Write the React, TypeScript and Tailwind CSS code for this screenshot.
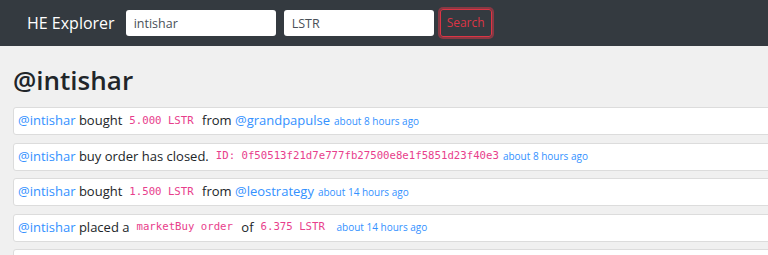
import React from "react";

const sans = "font-['Open_Sans','Noto_Sans',sans-serif]";
const mono = "font-['DejaVu_Sans_Mono','Liberation_Mono',monospace]";

function User({ name }: { name: string }) {
  return <span className="text-[#3391ff]">@{name}</span>;
}

function Code({ children, last }: { children: React.ReactNode; last?: boolean }) {
  return (
    <code className={`${mono} text-[10.7px] text-[#e83e8c] ml-[7px] ${last ? "mr-0" : "mr-[5px]"}`}>
      {children}
    </code>
  );
}

function Time({ children }: { children: React.ReactNode }) {
  return <span className="text-[10px] text-[#3391ff] ml-[4px]">{children}</span>;
}

function Card({ children }: { children: React.ReactNode }) {
  return (
    <div className="h-[28px] flex items-center bg-white border border-[#dcdcdc] rounded-[3px] pl-[4px] whitespace-nowrap text-[13px] text-[#212529]">
      {children}
    </div>
  );
}

export default function App() {
  return (
    <div className={`${sans} min-h-screen bg-[#f0f0f0] overflow-hidden`}>
      <nav className="h-[46px] bg-[#343a40] flex items-center pl-[27px]">
        <span className="text-white text-[16px] mr-[11px]">HE Explorer</span>
        <input
          readOnly
          value="intishar"
          className="w-[150px] h-[26px] bg-white rounded-[3px] px-[8px] text-[12.5px] text-[#495057] outline-none"
        />
        <input
          readOnly
          value="LSTR"
          className="w-[150px] h-[26px] bg-white rounded-[3px] px-[8px] ml-[8px] text-[12.5px] text-[#495057] outline-none"
        />
        <button className="ml-[6px] h-[28px] px-[6px] border border-[#dc3545] rounded-[3px] text-[#dc3545] text-[12px] shadow-[0_0_0_2px_rgba(220,53,69,0.5)]">
          Search
        </button>
      </nav>
      <main className="pl-[13px] mr-[-6px]">
        <h1 className="text-[26px] font-semibold text-[#212529] pt-[15px] pb-[8px] leading-[38px]">@intishar</h1>
        <div className="flex flex-col gap-[7.5px]">
          <Card>
            <User name="intishar" />
            &nbsp;bought
            <Code>5.000 LSTR</Code>
            &nbsp;from&nbsp;
            <User name="grandpapulse" />
            <Time>about 8 hours ago</Time>
          </Card>
          <Card>
            <User name="intishar" />
            &nbsp;buy order has closed.
            <Code last>ID: 0f50513f21d7e777fb27500e8e1f5851d23f40e3</Code>
            <Time>about 8 hours ago</Time>
          </Card>
          <Card>
            <User name="intishar" />
            &nbsp;bought
            <Code>1.500 LSTR</Code>
            &nbsp;from&nbsp;
            <User name="leostrategy" />
            <Time>about 14 hours ago</Time>
          </Card>
          <Card>
            <User name="intishar" />
            &nbsp;placed a
            <Code>marketBuy order</Code>
            &nbsp;of
            <Code>6.375 LSTR</Code>
            <Time>&nbsp;about 14 hours ago</Time>
          </Card>
          <Card>
            <span />
          </Card>
        </div>
      </main>
    </div>
  );
}
